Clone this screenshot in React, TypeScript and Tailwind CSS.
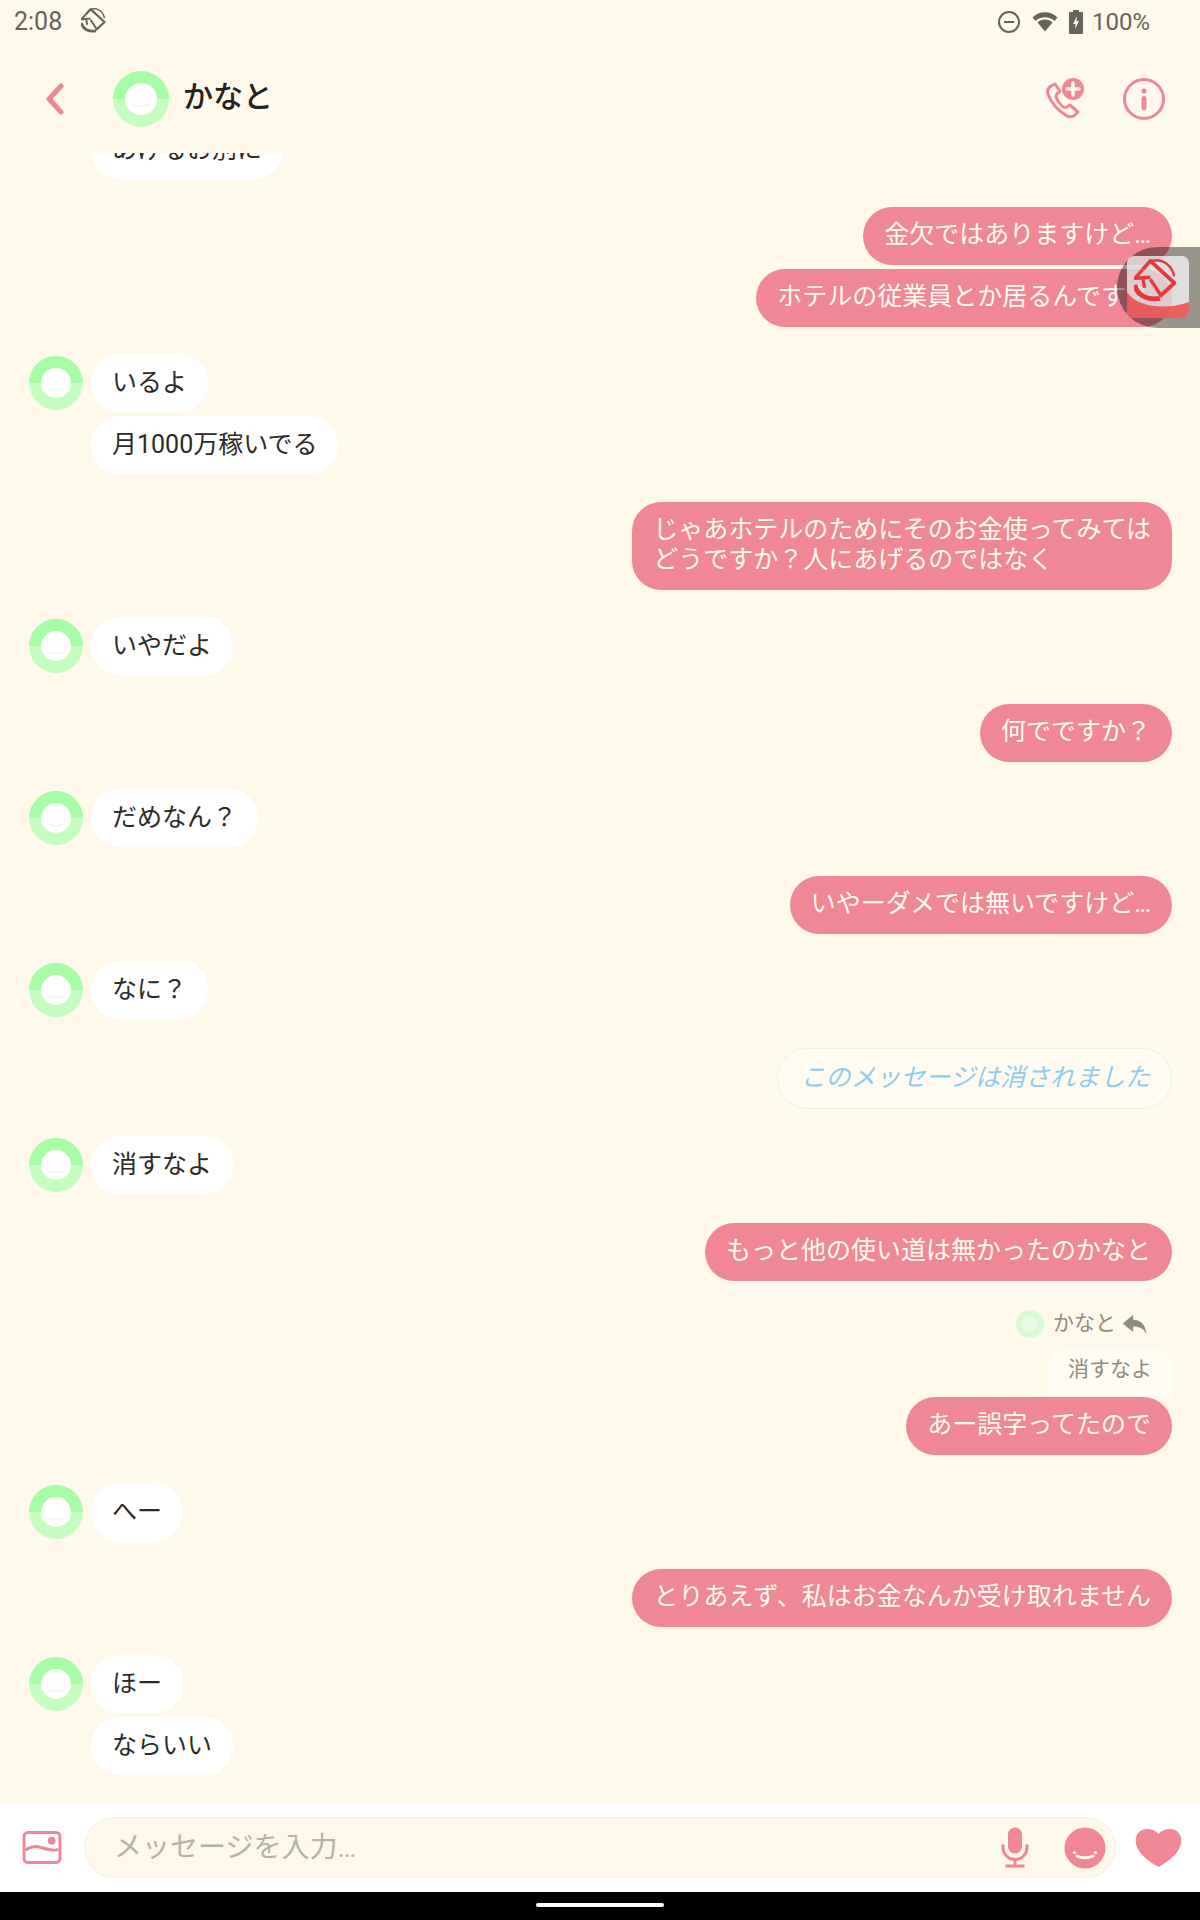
const jpFont = { fontFamily: 'Roboto, "Noto Sans CJK JP", sans-serif' };

function Avatar() {
  return (
    <svg viewBox="0 0 54 54" className="w-[54px] h-[54px]">
      <circle cx="27" cy="27" r="27" fill="#c6fdc0" />
      <path d="M0 27a27 27 0 0 1 54 0z" fill="#a6fda6" />
      <circle cx="27" cy="27" r="15" fill="#ffffff" />
      <path d="M20 33q7 3 14 0" fill="none" stroke="#eef8ea" strokeWidth="1.600" strokeLinecap="round" />
    </svg>
  );
}

function Logo({ color, className }: { color: string; className: string }) {
  return (
    <svg viewBox="0 0 50 50" className={className} fill="none" stroke={color} strokeLinejoin="round">
      <path d="M9 11 17 2 42 25 27 39" strokeWidth="4" />
      <path d="M16 3C25-1 38 2 42 18" strokeWidth="2.500" />
      <path d="M9 11 1 20 17 19M9 19 11 30" strokeWidth="3.500" />
      <path d="M17 21 28 38" strokeWidth="3.500" />
      <path d="M1 27C3 38 14 43 27 41" strokeWidth="5" />
    </svg>
  );
}

function Left({ text, avatar = true, mt = 27 }: { text: string; avatar?: boolean; mt?: number }) {
  return (
    <div className="flex items-start pl-[29px]" style={{ marginTop: mt }}>
      <div className="w-[54px] h-[54px] shrink-0 mt-[2px]">{avatar && <Avatar />}</div>
      <div className="ml-[8px] h-[58px] pl-[21px] pr-[21px] pb-[1px] flex items-center rounded-[29px] bg-white text-[#2c2a26] text-[25px] leading-[30px] whitespace-nowrap">
        {text}
      </div>
    </div>
  );
}

function Right({ lines, mt = 27 }: { lines: string[]; mt?: number }) {
  return (
    <div className="flex justify-end pr-[28px]" style={{ marginTop: mt }}>
      <div className="pt-[13px] pb-[15px] px-[21px] rounded-[29px] bg-[#f08795] text-[#fffaf0] text-[25px] leading-[30px] whitespace-nowrap">
        {lines.map((l) => (
          <div key={l}>{l}</div>
        ))}
      </div>
    </div>
  );
}

export default function App() {
  return (
    <div className="w-[1200px] h-[1920px] flex flex-col bg-[#fff9eb] relative overflow-hidden" style={jpFont}>
      {/* status bar */}
      <div className="h-[44px] shrink-0 flex items-center pl-[14px] pr-[50px] text-[#66635a] text-[24px]">
        <span className="text-[25px]">2:08</span>
        <Logo color="#66635a" className="w-[28px] h-[28px] ml-[19px]" />
        <div className="ml-auto flex items-center">
          <svg viewBox="0 0 24 24" className="w-[24px] h-[24px]" fill="none" stroke="#66635a" strokeWidth="2">
            <circle cx="12" cy="12" r="10" />
            <path d="M7 12h10" />
          </svg>
          <svg viewBox="0 0 26 22" className="w-[26px] h-[22px] ml-[11px]">
            <path d="M0.500 6.500C7-0.500 19-0.500 25.500 6.500L22.500 10C17.500 5 8.500 5 3.500 10Z" fill="#66635a" />
            <path d="M5.500 11.500C9.500 7.500 16.500 7.500 20.500 11.500L13 20.500Z" fill="#66635a" />
          </svg>
          <svg viewBox="0 0 14 24" className="w-[14px] h-[24px] ml-[11px]">
            <path d="M4 0h6v2h3a1 1 0 0 1 1 1v20a1 1 0 0 1-1 1H1a1 1 0 0 1-1-1V3a1 1 0 0 1 1-1h3z" fill="#66635a" />
            <path d="M8 6 4 14h2.500L6 19l4-8H7.500z" fill="#fff9eb" />
          </svg>
          <span className="ml-[9px]">100%</span>
        </div>
      </div>

      {/* header */}
      <div className="h-[109px] shrink-0 flex items-center">
        <svg viewBox="0 0 20 32" className="w-[20px] h-[32px] ml-[45px]" fill="none" stroke="#f08795" strokeWidth="5" strokeLinecap="round" strokeLinejoin="round">
          <path d="M16 3 4 16l12 13" />
        </svg>
        <div className="ml-[48px] mt-[1px]">
          <svg viewBox="0 0 56 56" className="w-[56px] h-[56px]">
            <circle cx="28" cy="28" r="28" fill="#c6fdc0" />
            <path d="M0 28a28 28 0 0 1 56 0z" fill="#a6fda6" />
            <circle cx="28" cy="28" r="16" fill="#ffffff" />
            <path d="M21 34q7 3 14 0" fill="none" stroke="#eef8ea" strokeWidth="1.600" strokeLinecap="round" />
          </svg>
        </div>
        <span className="ml-[14px] text-[30px] font-medium text-[#24221e] mb-[5px]">かなと</span>
        <div className="ml-auto flex items-center pr-[35px]">
          <svg viewBox="0 0 40 42" className="w-[40px] h-[42px]">
            <path d="M6 8c-3 2-4 5-3 8 3 9 9 16 19 22 3 1 6 1 8-1l3-3-8-7-3 2c-2 1-3 1-5-1-3-3-5-6-6-9 0-2 0-3 2-4l2-2-5-7z" fill="none" stroke="#f08795" strokeWidth="3" strokeLinejoin="round" />
            <circle cx="28" cy="11" r="11" fill="#f08795" />
            <path d="M28 5v12M22 11h12" stroke="#fff9eb" strokeWidth="3.500" strokeLinecap="round" />
          </svg>
          <svg viewBox="0 0 42 42" className="w-[42px] h-[42px] ml-[38px]">
            <circle cx="21" cy="21" r="19.500" fill="none" stroke="#f08795" strokeWidth="3" />
            <circle cx="21" cy="13" r="2.500" fill="#f08795" />
            <rect x="18.500" y="18" width="5" height="14" rx="2.500" fill="#f08795" />
          </svg>
        </div>
      </div>

      {/* messages */}
      <div className="flex-1 min-h-0 overflow-hidden">
        <div className="mt-[-32px]">
          <Left text="あげるお別に" avatar={false} mt={0} />
          <Right lines={['金欠ではありますけど…']} mt={28} />
          <Right lines={['ホテルの従業員とか居るんです？']} mt={4} />
          <Left text="いるよ" />
          <Left text="月1000万稼いでる" avatar={false} mt={4} />
          <Right lines={['じゃあホテルのためにそのお金使ってみては', 'どうですか？人にあげるのではなく']} mt={28} />
          <Left text="いやだよ" />
          <Right lines={['何でですか？']} mt={29} />
          <Left text="だめなん？" />
          <Right lines={['いやーダメでは無いですけど…']} mt={29} />
          <Left text="なに？" />
          <div className="flex justify-end pr-[28px] mt-[29px]">
            <div className="h-[61px] pl-[22px] pr-[21px] pb-[1px] flex items-center rounded-[30px] border border-[#e6f2e6] bg-[#fffbf0] text-[#8ecbee] text-[25px] italic whitespace-nowrap">
              このメッセージは消されました
            </div>
          </div>
          <Left text="消すなよ" />
          <Right lines={['もっと他の使い道は無かったのかなと']} mt={29} />
          {/* reply quote */}
          <div className="flex flex-col items-end pr-[28px] mt-[29px]">
            <div className="flex items-center h-[28px] pr-[24px] text-[21px] text-[#8f8c80]">
              <svg viewBox="0 0 28 28" className="w-[28px] h-[28px]">
                <circle cx="14" cy="14" r="14" fill="#d9f9d2" />
                <circle cx="14" cy="14" r="8" fill="#e9fae3" />
              </svg>
              <span className="ml-[9px]">かなと</span>
              <svg viewBox="0 0 26 20" className="w-[26px] h-[19px] ml-[6px]">
                <path d="M0 9 11 0v5c8 0 13 5 14 15-3-6-7-8-14-8v6z" fill="#8f8c80" />
              </svg>
            </div>
            <div className="mt-[12px] h-[47px] px-[20px] pb-[8px] flex items-center rounded-t-[16px] bg-[#fffcf3] text-[21px] text-[#8f8c80]">
              消すなよ
            </div>
            <div className="pt-[13px] pb-[15px] px-[21px] rounded-[29px] bg-[#f08795] text-[#fffaf0] text-[25px] leading-[30px] whitespace-nowrap">
              あー誤字ってたので
            </div>
          </div>
          <Left text="へー" mt={28} />
          <Right lines={['とりあえず、私はお金なんか受け取れません']} mt={28} />
          <Left text="ほー" mt={28} />
          <Left text="ならいい" avatar={false} mt={4} />
        </div>
      </div>

      {/* composer */}
      <div className="h-[89px] shrink-0 bg-white flex items-center pl-[22px]">
        <svg viewBox="0 0 40 34" className="w-[40px] h-[33px] shrink-0">
          <rect x="1.500" y="1.500" width="37" height="31" rx="4" fill="none" stroke="#f08795" strokeWidth="3" />
          <circle cx="30" cy="10" r="4" fill="#f08795" />
          <path d="M3 20c5-4 10-5 16-3s12 4 18 2" fill="none" stroke="#f08795" strokeWidth="3" />
        </svg>
        <div className="ml-[22px] w-[1032px] h-[61px] shrink-0 rounded-[30px] border border-[#f2efe6] bg-[#fdf8ea] flex items-center pl-[29px] pr-[9px]">
          <span className="text-[28px] leading-[34px] text-[#b5b2a5]">メッセージを入力…</span>
          <svg viewBox="0 0 28 40" className="w-[28px] h-[41px] ml-auto">
            <rect x="7" y="0" width="14" height="26" rx="7" fill="#f08795" />
            <path d="M2 17v3a12 12 0 0 0 24 0v-3M14 32v6M4.500 38.500h19" fill="none" stroke="#f08795" strokeWidth="3" />
          </svg>
          <svg viewBox="0 0 42 42" className="w-[42px] h-[42px] ml-[35px]">
            <circle cx="21" cy="21" r="20.500" fill="#f08795" />
            <path d="M13 29q8 3.500 16 0" fill="none" stroke="#fffaf0" strokeWidth="3" strokeLinecap="round" />
            <circle cx="10.500" cy="25.500" r="1.600" fill="#fffaf0" />
            <circle cx="31.500" cy="25.500" r="1.600" fill="#fffaf0" />
          </svg>
        </div>
        <svg viewBox="0 0 48 40" className="w-[47px] h-[38px] ml-[19px] shrink-0">
          <path d="M24 40C12 33 0 24 0 12 0 5 5 0 12 0c5 0 9 2 12 5 3-3 7-5 12-5 7 0 12 5 12 12 0 12-12 21-24 28z" fill="#f08795" />
        </svg>
      </div>

      {/* nav bar */}
      <div className="h-[28px] shrink-0 bg-black flex justify-center">
        <div className="w-[128px] h-[4px] mt-[11px] rounded-full bg-white" />
      </div>

      {/* floating bubble over the chat */}
      <div className="absolute left-[1117px] top-[247px] w-[83px] h-[81px] rounded-l-[41px] bg-black/40" />
      <div className="absolute left-[1127px] top-[256px] w-[62px] h-[62px] rounded-[7px] overflow-hidden bg-white/70 flex items-center justify-center">
        <svg viewBox="0 0 62 62" className="absolute inset-0 w-[62px] h-[62px]">
          <path d="M0 36C10 52 40 54 62 46V62H0Z" fill="#ee2a2a" fillOpacity="0.7" />
        </svg>
        <Logo color="#e5393f" className="relative w-[48px] h-[48px] mb-[8px]" />
      </div>
    </div>
  );
}
